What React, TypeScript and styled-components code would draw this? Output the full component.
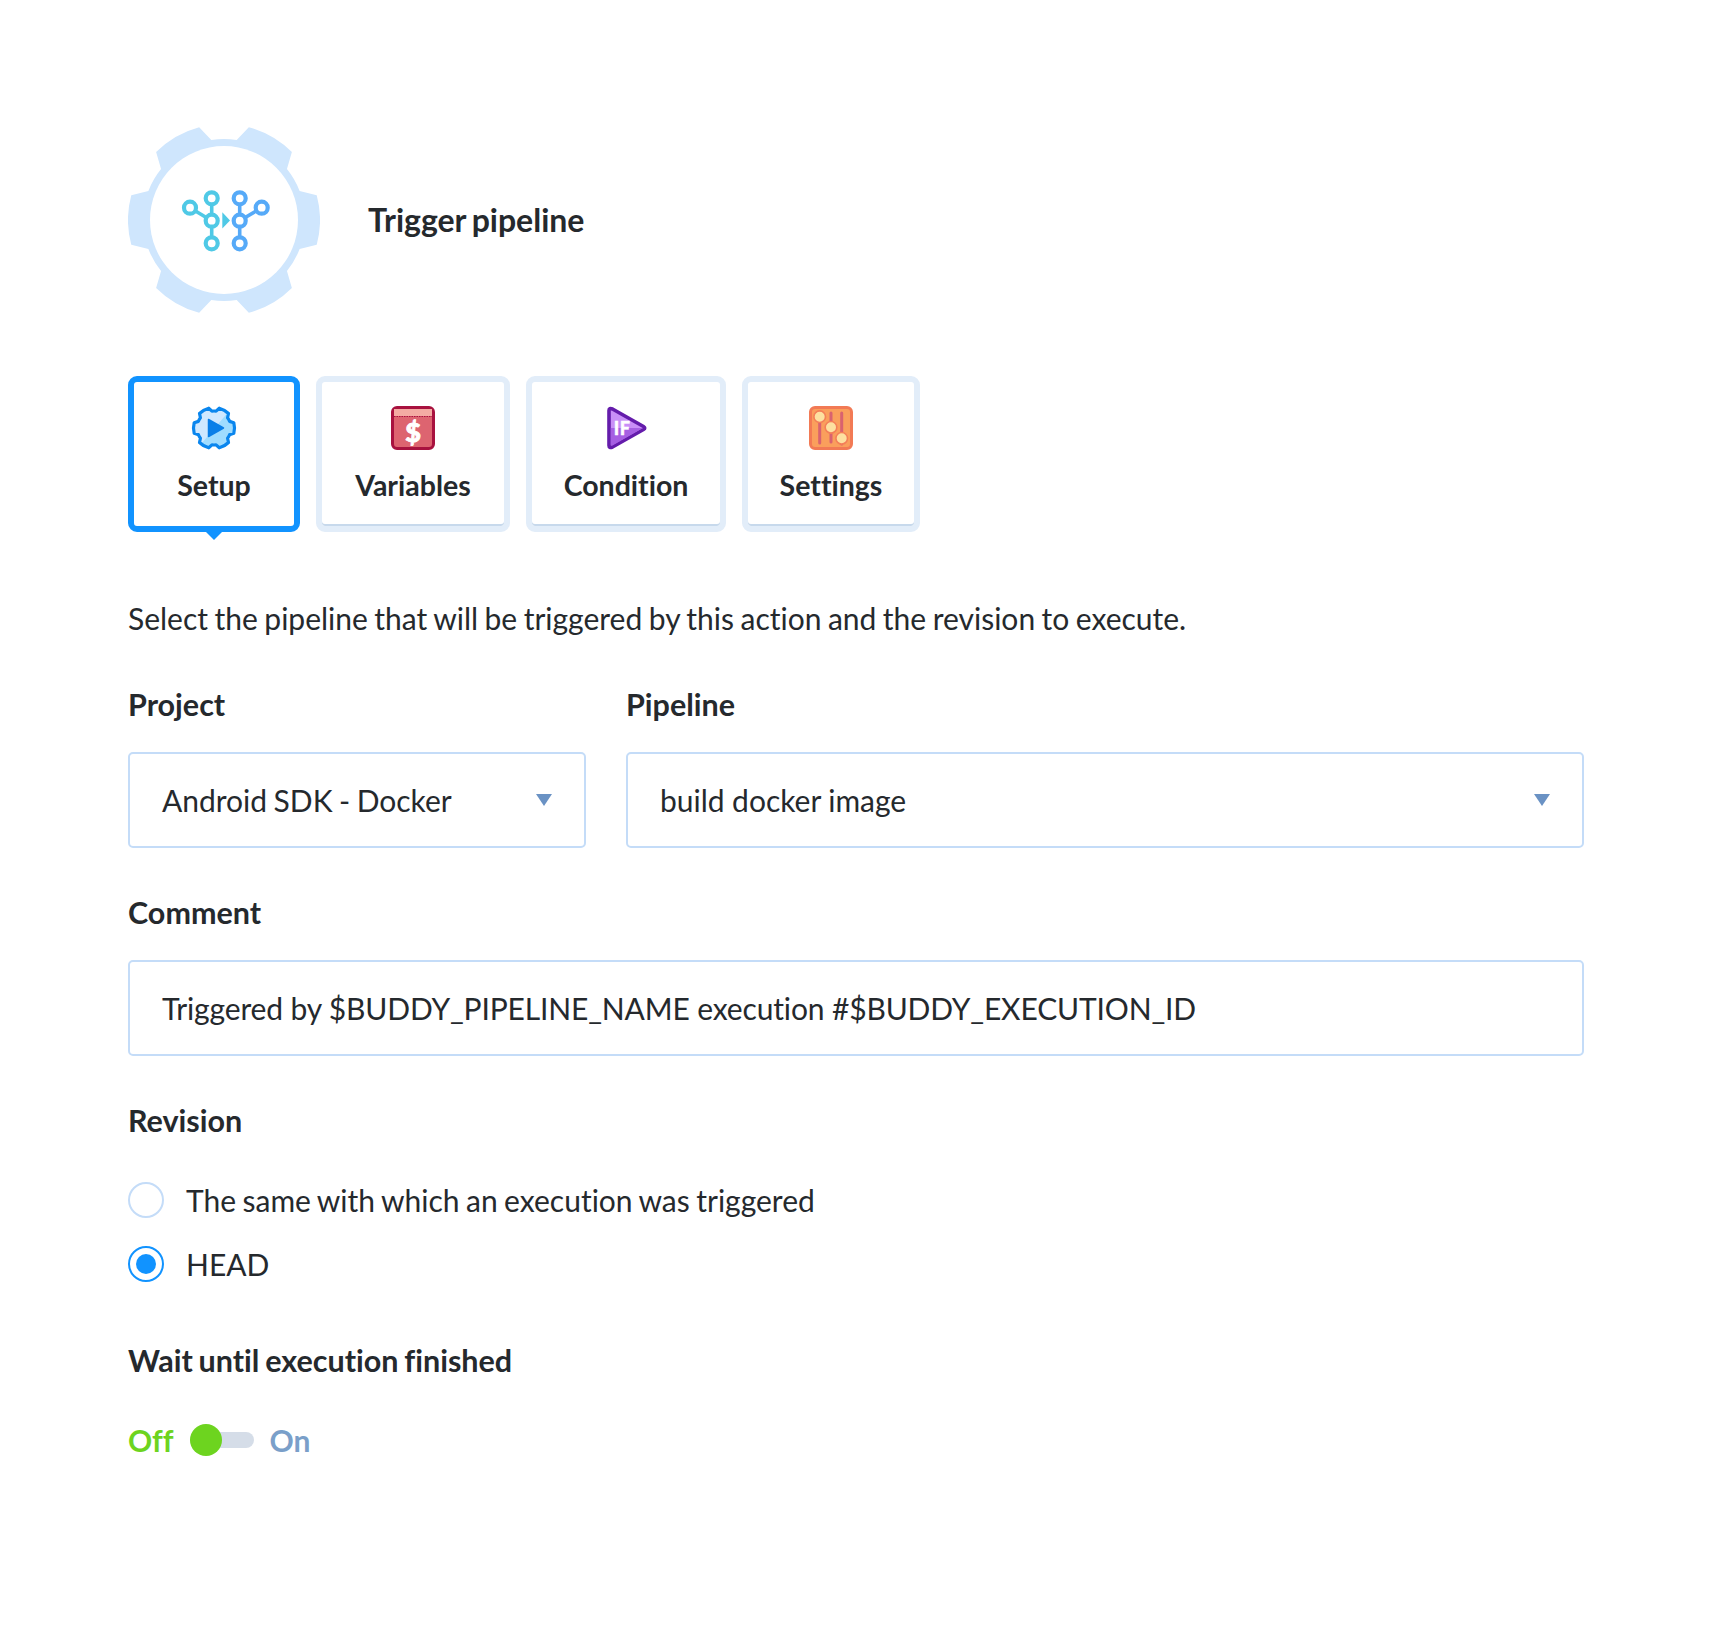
import React from "react";
import styled, { createGlobalStyle } from "styled-components";

const Global = createGlobalStyle`
  html, body { margin: 0; padding: 0; background: #ffffff; }
  body {
    font-family: "Lato", "Liberation Sans", sans-serif;
    color: #25292d;
    font-variant-ligatures: none;
    -webkit-font-smoothing: antialiased;
  }
`;

const Page = styled.div`
  box-sizing: border-box;
  width: 1712px;
  height: 1632px;
  padding: 124px 128px 0;
`;

const Header = styled.header`
  display: flex;
  align-items: center;
  gap: 48px;
  height: 192px;
`;

const Title = styled.h1`
  margin: 0;
  font-size: 32px;
  line-height: 40px;
  font-weight: 700;
  word-spacing: -2px;
`;

const Tabs = styled.nav`
  display: flex;
  gap: 16px;
  margin-top: 60px;
`;

const Tab = styled.div<{ $active?: boolean; $width: number }>`
  position: relative;
  box-sizing: border-box;
  width: ${(p) => p.$width}px;
  height: 156px;
  padding-top: 24px;
  display: flex;
  flex-direction: column;
  align-items: center;
  gap: 17px;
  background: #fff;
  border: 6px solid ${(p) => (p.$active ? "#1193ff" : "#e2edf9")};
  border-radius: 9px;
  box-shadow: ${(p) => (p.$active ? "none" : "inset 0 -2px 0 #c7d9ec")};
  font-size: 28.5px;
  line-height: 36px;
  font-weight: 700;
  ${(p) =>
    p.$active &&
    `&::after {
      content: "";
      position: absolute;
      left: 50%;
      bottom: -14px;
      margin-left: -8px;
      border-left: 8px solid transparent;
      border-right: 8px solid transparent;
      border-top: 8px solid #1193ff;
    }`}
`;

const Icon = styled.svg`
  display: block;
  width: 56px;
  height: 44px;
  flex: none;
`;

const Description = styled.p`
  margin: 65px 0 0;
  font-size: 30px;
  line-height: 42px;
  font-weight: 400;
  word-spacing: -1.2px;
`;

const Row = styled.div`
  display: flex;
  gap: 40px;
`;

const Field = styled.div<{ $grow?: number; $width?: number }>`
  flex: ${(p) => (p.$grow ? p.$grow : "none")};
  width: ${(p) => (p.$width ? `${p.$width}px` : "auto")};
  min-width: 0;
`;

const Label = styled.div<{ $top: number }>`
  margin-top: ${(p) => p.$top}px;
  font-size: 30.5px;
  line-height: 40px;
  font-weight: 700;
  word-spacing: -1.6px;
`;

const InputBox = styled.div<{ $word?: number; $letter?: number }>`
  position: relative;
  box-sizing: border-box;
  height: 96px;
  margin-top: 28px;
  padding: 0 32px;
  display: flex;
  align-items: center;
  border: 2px solid #c4dcf8;
  border-radius: 5px;
  font-size: 30px;
  line-height: 40px;
  word-spacing: ${(p) => p.$word ?? -1.2}px;
  letter-spacing: ${(p) => p.$letter ?? 0}px;
`;

const Caret = styled.span`
  position: absolute;
  right: 32px;
  top: 50%;
  margin-top: -6px;
  border-left: 8px solid transparent;
  border-right: 8px solid transparent;
  border-top: 12px solid #6a92c4;
`;

const Radios = styled.div`
  display: flex;
  flex-direction: column;
  gap: 28px;
  margin-top: 42px;
`;

const RadioRow = styled.label`
  display: flex;
  align-items: center;
  gap: 22px;
  height: 36px;
  font-size: 30px;
  word-spacing: -1.2px;
`;

const RadioDot = styled.span<{ $on?: boolean }>`
  box-sizing: border-box;
  width: 36px;
  height: 36px;
  border-radius: 50%;
  background: #fff;
  border: 2px solid ${(p) => (p.$on ? "#1193ff" : "#c4dcf8")};
  display: flex;
  align-items: center;
  justify-content: center;
  &::after {
    content: "";
    display: ${(p) => (p.$on ? "block" : "none")};
    width: 20px;
    height: 20px;
    border-radius: 50%;
    background: #1193ff;
  }
`;

const ToggleRow = styled.div`
  display: flex;
  align-items: center;
  gap: 16px;
  height: 40px;
  margin-top: 40px;
  font-size: 30px;
  font-weight: 700;
`;

const ToggleText = styled.span<{ $on?: boolean }>`
  color: ${(p) => (p.$on ? "#6dd41f" : "#7a9fc9")};
`;

const Track = styled.span`
  position: relative;
  display: block;
  width: 64px;
  height: 16px;
  border-radius: 8px;
  background: #d5dde8;
`;

const Knob = styled.span`
  position: absolute;
  left: 0;
  top: -8px;
  width: 32px;
  height: 32px;
  border-radius: 50%;
  background: #6dd41f;
`;

function gearPath(cx: number, cy: number, rTip: number, rBase: number, tipHalf: number, baseHalf: number): string {
  const pt = (r: number, deg: number) => {
    const a = ((deg - 90) * Math.PI) / 180;
    return `${(cx + r * Math.cos(a)).toFixed(2)} ${(cy + r * Math.sin(a)).toFixed(2)}`;
  };
  let d = "";
  for (let i = 0; i < 6; i++) {
    const c = 30 + i * 60;
    d += `${i === 0 ? "M" : "A"}${i === 0 ? "" : ` ${rBase} ${rBase} 0 0 1 `}${pt(rBase, c - baseHalf)} `;
    d += `L${pt(rTip, c - tipHalf)} A${rTip} ${rTip} 0 0 1 ${pt(rTip, c + tipHalf)} L${pt(rBase, c + baseHalf)} `;
  }
  d += `A${rBase} ${rBase} 0 0 1 ${pt(rBase, 30 - baseHalf)} Z`;
  return d;
}

const Node = ({ x, y, c }: { x: number; y: number; c: string }) => (
  <circle cx={x} cy={y} r={6} fill="#fff" stroke={c} strokeWidth={4.2} />
);

const HeaderGear = () => {
  const a = "#4fc9e6";
  const b = "#56aaf8";
  return (
    <svg width="192" height="192" viewBox="0 0 192 192" style={{ flex: "none" }}>
      <path d={gearPath(96, 96, 96, 81, 15, 21)} fill="#cfe6fd" />
      <circle cx="96" cy="96" r="74" fill="#fff" />
      <g stroke={a} strokeWidth={3.6} fill="none">
        <path d="M83.7 74.3V119.3M62 83.7L83.7 96.7" />
      </g>
      <g stroke={b} strokeWidth={3.6} fill="none">
        <path d="M111.7 74.3V119.3M133.7 83.7L111.7 96.7" />
      </g>
      <Node x={83.7} y={74.3} c={a} />
      <Node x={62} y={83.7} c={a} />
      <Node x={83.7} y={96.7} c={a} />
      <Node x={83.7} y={119.3} c={a} />
      <Node x={111.7} y={74.3} c={b} />
      <Node x={133.7} y={83.7} c={b} />
      <Node x={111.7} y={96.7} c={b} />
      <Node x={111.7} y={119.3} c={b} />
      <path d="M94.3 88.3L102 96.5L94.3 104.5Z" fill={a} />
    </svg>
  );
};

const SetupIcon = () => {
  const d = gearPath(28, 22, 20.5, 17, 15, 23);
  return (
    <Icon viewBox="0 0 56 44">
      <defs>
        <clipPath id="setup-clip">
          <path d="M44 4H56V44H10Z" />
        </clipPath>
      </defs>
      <path d={d} fill="#cfe8ff" />
      <path d={d} fill="#9fdcff" clipPath="url(#setup-clip)" />
      <path d={d} fill="none" stroke="#0a86ee" strokeWidth={3.2} strokeLinejoin="round" />
      <path d="M22.5 13.5L37.5 22L22.5 30.5Z" fill="#0a7fe8" stroke="#0a7fe8" strokeWidth={1.5} strokeLinejoin="round" />
    </Icon>
  );
};

const VariablesIcon = () => (
  <Icon viewBox="0 0 56 44">
    <rect x="7.5" y="1.5" width="41" height="41" rx="4.5" fill="#dd6470" stroke="#a8123f" strokeWidth={3} />
    <rect x="9" y="3" width="38" height="7" fill="#f4aba3" />
    <path d="M9 10.5H47" stroke="#a8123f" strokeWidth={1} strokeDasharray="1.5 1" />
    <text x="28" y="36" textAnchor="middle" fontFamily="Lato, sans-serif" fontWeight={900} fontSize={27} fill="#fff" stroke="#fff" strokeWidth={0.9}>$</text>
  </Icon>
);

const ConditionIcon = () => (
  <Icon viewBox="0 0 56 44">
    <path d="M11 4.5Q11 1.5 14.5 3L45.5 20.5Q48 22 45.5 23.5L14.5 41Q11 42.5 11 39.5Z" fill="#c98ff7" stroke="#641cab" strokeWidth={3.6} strokeLinejoin="round" />
    <path d="M12.8 22H45L14.5 39.5Q12.8 40 12.8 38.5Z" fill="#a65fe2" />
    <text x="24" y="29" textAnchor="middle" fontFamily="Lato, sans-serif" fontWeight={900} fontSize={18} fill="#fff" stroke="#fff" strokeWidth={0.4} letterSpacing="0.5">IF</text>
  </Icon>
);

const SettingsIcon = () => {
  const pink = "#d9626f";
  return (
    <Icon viewBox="0 0 56 44">
      <rect x="7.5" y="1.5" width="41" height="41" rx="4.5" fill="#fa9f5c" stroke="#f27a55" strokeWidth={3} />
      <path d="M16.7 12V37M28 7V36M38.7 7V38" stroke={pink} strokeWidth={3} strokeLinecap="round" />
      <circle cx="16.7" cy="10.7" r="5.8" fill="#fde0a0" stroke="#f47f58" strokeWidth={1.6} />
      <circle cx="28" cy="21.3" r="5.8" fill="#fde0a0" stroke="#f47f58" strokeWidth={1.6} />
      <circle cx="38.7" cy="32.3" r="5.8" fill="#fde0a0" stroke="#f47f58" strokeWidth={1.6} />
    </Icon>
  );
};

export default function App() {
  return (
    <Page>
      <Global />
      <Header>
        <HeaderGear />
        <Title>Trigger pipeline</Title>
      </Header>
      <Tabs>
        <Tab $active $width={172}><SetupIcon />Setup</Tab>
        <Tab $width={194}><VariablesIcon />Variables</Tab>
        <Tab $width={200}><ConditionIcon />Condition</Tab>
        <Tab $width={178}><SettingsIcon />Settings</Tab>
      </Tabs>
      <Description>Select the pipeline that will be triggered by this action and the revision to execute.</Description>
      <Row>
        <Field $width={458}>
          <Label $top={45}>Project</Label>
          <InputBox>Android SDK - Docker<Caret /></InputBox>
        </Field>
        <Field $grow={1}>
          <Label $top={45}>Pipeline</Label>
          <InputBox $word={-0.2}>build docker image<Caret /></InputBox>
        </Field>
      </Row>
      <Label $top={44}>Comment</Label>
      <InputBox $word={0} $letter={-0.147}>Triggered by $BUDDY_PIPELINE_NAME execution #$BUDDY_EXECUTION_ID</InputBox>
      <Label $top={44}>Revision</Label>
      <Radios>
        <RadioRow><RadioDot />The same with which an execution was triggered</RadioRow>
        <RadioRow><RadioDot $on />HEAD</RadioRow>
      </Radios>
      <Label $top={58}>Wait until execution finished</Label>
      <ToggleRow>
        <ToggleText $on>Off</ToggleText>
        <Track><Knob /></Track>
        <ToggleText>On</ToggleText>
      </ToggleRow>
    </Page>
  );
}
